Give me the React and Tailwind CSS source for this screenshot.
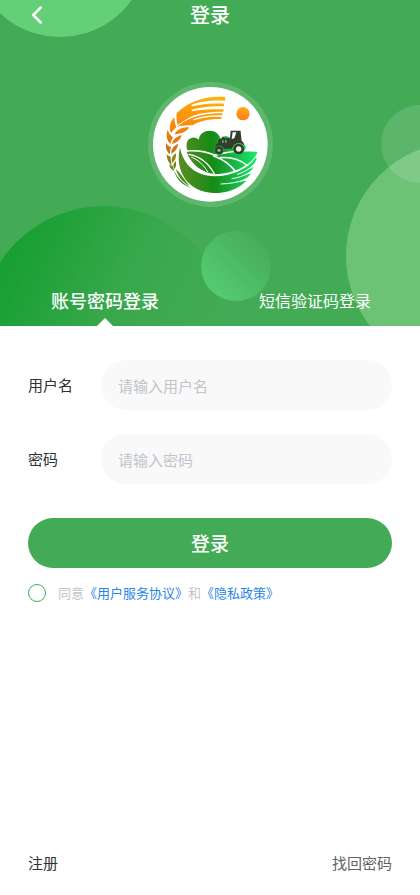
import { useState } from 'react'
import { ChevronLeft } from 'lucide-react'

export default function App() {
  const [tab, setTab] = useState('password')

  return (
    <div className="flex min-h-screen flex-col bg-white font-['Noto_Sans_CJK_SC','Noto_Sans',sans-serif]">
      <Header tab={tab} onTab={setTab} />

      <main className="flex flex-1 flex-col px-7 pt-[34px] pb-5">
        <LoginForm />
        <Footer />
      </main>
    </div>
  )
}

function Header({ tab, onTab }) {
  return (
    <header className="relative isolate overflow-hidden bg-[#43ab55] text-white">
      <HeaderBackground />

      <div className="grid h-[30px] grid-cols-3 items-center px-[22px]">
        <button type="button" aria-label="返回" className="justify-self-start">
          <ChevronLeft size={30} strokeWidth={2} />
        </button>
        <h1 className="text-center text-[20px] leading-7 font-medium">登录</h1>
      </div>

      <div className="mx-auto mt-[52px] size-[125px] rounded-full bg-white/15 p-[5px]">
        <Logo />
      </div>

      <nav className="mt-[78px] grid grid-cols-2">
        <TabButton active={tab === 'password'} onClick={() => onTab('password')}>账号密码登录</TabButton>
        <TabButton active={tab === 'sms'} onClick={() => onTab('sms')}>短信验证码登录</TabButton>
      </nav>
    </header>
  )
}

function TabButton({ active, onClick, children }) {
  return (
    <button type="button" onClick={onClick} className="flex h-[41px] flex-col items-center justify-between">
      <span className={active ? 'text-[18px] leading-[30px] font-medium' : 'text-[16px] leading-[30px]'}>{children}</span>
      {active && (
        <svg width="16" height="8" viewBox="0 0 16 8" fill="#fff">
          <path d="M0 8 8 0l8 8z" />
        </svg>
      )}
    </button>
  )
}

function HeaderBackground() {
  return (
    <svg
      className="absolute inset-0 -z-10 size-full"
      viewBox="0 0 420 326"
      preserveAspectRatio="xMidYMid slice"
      aria-hidden="true"
    >
      <defs>
        <linearGradient id="hill" x1="0.12" y1="0.2" x2="0.95" y2="0.6">
          <stop offset="0" stopColor="#179f31" />
          <stop offset="0.5" stopColor="#38a84c" />
          <stop offset="1" stopColor="#43ab55" />
        </linearGradient>
        <linearGradient id="bubble" x1="0.2" y1="0.8" x2="0.85" y2="0.15">
          <stop offset="0" stopColor="#54c970" />
          <stop offset="1" stopColor="#46ae58" />
        </linearGradient>
      </defs>
      <circle cx="60" cy="-51" r="88" fill="#63d077" />
      <circle cx="104" cy="330" r="124" fill="url(#hill)" />
      <circle cx="236" cy="266" r="35" fill="url(#bubble)" />
      <circle cx="460" cy="256" r="114" fill="#6cc375" />
      <circle cx="420" cy="144" r="39" fill="#fff" fillOpacity="0.13" />
    </svg>
  )
}

// Wheat ear, fields and tractor inside a white disc
function Logo() {
  return (
    <svg className="size-full" viewBox="38 36 345 345" role="img" aria-label="logo">
      <defs>
        <linearGradient id="wheat" gradientUnits="userSpaceOnUse" x1="180" y1="60" x2="120" y2="330">
          <stop offset="0" stopColor="#ffb00c" />
          <stop offset="0.4" stopColor="#f5870c" />
          <stop offset="0.6" stopColor="#dd7412" />
          <stop offset="0.78" stopColor="#7d861c" />
          <stop offset="1" stopColor="#2f8f1c" />
        </linearGradient>
        <linearGradient id="field" gradientUnits="userSpaceOnUse" x1="115" y1="260" x2="340" y2="250">
          <stop offset="0" stopColor="#5c8c20" />
          <stop offset="0.45" stopColor="#168a17" />
          <stop offset="0.75" stopColor="#16b845" />
          <stop offset="1" stopColor="#18e468" />
        </linearGradient>
        <linearGradient id="sun" x1="0" y1="0" x2="0" y2="1">
          <stop offset="0" stopColor="#ffac18" />
          <stop offset="1" stopColor="#ff7a1c" />
        </linearGradient>
      </defs>

      <circle cx="210" cy="208" r="172" fill="#fff" />
      <circle cx="308" cy="116" r="20" fill="url(#sun)" />

      {/* wheat ear */}
      <g fill="url(#wheat)">
        <path d="M255 66C202 61 149 75 109 114C108 128 109 138 112 150C127 139 143 129 158 122C184 113 212 110 249 110L250 103C216 102 185 103 156 109L153 105C181 96 211 93 251 94L252 86C216 84 183 87 155 94L153 90C181 78 215 76 254 77Z" />
        <path d="M247 115C207 114 169 121 142 134C128 141 119 148 111 155C129 151 144 151 157 151C180 137 210 131 243 132L244 126C211 123 184 128 160 136L158 133C184 123 211 120 246 121Z" />
        <path d="M102 126C89 141 85 158 92 174C97 167 103 162 108 156C104 147 102 137 102 126Z" />
        <path d="M82 164C76 181 79 195 90 207C92 199 95 193 98 187C91 182 85 174 82 164Z" />
        <path d="M77 203C75 219 79 229 89 238C89 230 90 222 92 216C86 214 80 210 77 203Z" />
        <path d="M79 237C79 252 84 263 94 272C92 262 91 252 91 245C87 244 82 241 79 237Z" />
        <path d="M86 267C88 278 94 284 102 289C99 281 98 277 97 273C94 272 89 270 86 267Z" />
        <path d="M103 178C108 165 121 157 147 157C139 171 124 176 103 178Z" />
        <path d="M95 207C97 194 107 185 124 180C120 194 112 202 95 207Z" />
        <path d="M93 236C92 222 100 212 114 206C112 219 106 229 93 236Z" />
        <path d="M95 264C92 251 97 241 107 235C108 247 105 257 95 264Z" />
        <path d="M101 283C97 272 99 264 106 258C109 268 108 276 101 283Z" />
        <path d="M101 287C107 310 125 330 151 338C128 325 112 308 101 287Z" />
        <path d="M107 282C112 304 128 323 147 332C133 316 122 296 107 282Z" />
      </g>

      {/* bushes */}
      <path
        d="M141 226C136 209 138 190 157 188C164 187 170 190 175 194C178 175 192 167 208 167C225 167 237 177 240 191C247 181 265 181 271 191L310 208C317 213 318 220 314 224C281 226 248 231 224 238C196 226 168 223 141 226Z"
        fill="url(#field)"
      />

      {/* fields */}
      <g fill="url(#field)">
        <path d="M139 231C169 227 199 234 224 244C263 230 306 227 351 231C344 260 294 296 225 298C183 292 153 269 139 231Z" />
        <path d="M119 217C128 269 165 303 222 304C275 303 323 282 345 248L349 249C346 263 338 273 325 283L340 276C334 288 322 297 307 303L332 295C324 308 311 316 291 321L318 317C294 342 261 354 222 354C155 354 100 300 119 217Z" />
      </g>
      <g fill="none" stroke="#fff" strokeLinecap="round">
        <path d="M220 243C248 253 270 269 285 289" strokeWidth="5" />
        <path d="M146 238C184 245 206 266 223 298" strokeWidth="4" />
        <path d="M154 247C172 253 190 270 202 290" strokeWidth="3" />
        <path d="M240 248C272 245 301 255 320 271" strokeWidth="5" />
        <path d="M338 270C327 283 311 292 291 298" strokeWidth="3" />
        <path d="M328 292C313 302 295 308 275 311" strokeWidth="3" />
        <path d="M316 313C291 323 268 326 242 327" strokeWidth="3" />
      </g>

      {/* tractor */}
      <g fill="#343d2c">
        <path
          fillRule="evenodd"
          d="M271 167H301V172L304 198C310 202 312 207 312 212C304 203 288 202 279 213L274 221H250C248 211 235 209 226 216C224 211 229 207 233 205L235 193L246 191V185H250V190H269ZM277 172L274 192L282 190L288 172Z"
        />
        <path fill="#6da65c" d="M245 196h5v8h-5zM254 195h5v8h-5z" />
        <circle cx="295" cy="222" r="18" fill="#35c957" />
        <circle cx="295" cy="222" r="16" />
        <circle cx="295" cy="222" r="8" fill="#e8f6e9" />
        <circle cx="236" cy="226" r="14" fill="#23a837" />
        <circle cx="236" cy="226" r="12" />
        <circle cx="236" cy="226" r="5" fill="#7fc088" />
      </g>
    </svg>
  )
}

function LoginForm() {
  return (
    <form onSubmit={(e) => e.preventDefault()}>
      <div className="flex flex-col gap-6">
        <Field id="username" label="用户名" type="text" placeholder="请输入用户名" />
        <Field id="password" label="密码" type="password" placeholder="请输入密码" />
      </div>

      <button type="submit" className="mt-[34px] h-[50px] w-full rounded-full bg-[#43ab55] text-[19px] font-medium text-white">
        登录
      </button>

      <div className="mt-4 flex items-center text-[13px] leading-[18px] text-[#c0c4cc]">
        <input
          id="agree"
          type="checkbox"
          className="mr-3 size-[18px] appearance-none rounded-full border border-[#43ab55] checked:bg-[#43ab55]"
        />
        <label htmlFor="agree">同意</label>
        <a href="#terms" className="text-[#2b85e4]">《用户服务协议》</a>
        <span>和</span>
        <a href="#privacy" className="text-[#2b85e4]">《隐私政策》</a>
      </div>
    </form>
  )
}

function Field({ id, label, type, placeholder }) {
  return (
    <div className="flex items-center">
      <label htmlFor={id} className="w-[73px] shrink-0 text-[15px] text-[#303133]">{label}</label>
      <input
        id={id}
        type={type}
        placeholder={placeholder}
        className="h-[50px] min-w-0 flex-1 rounded-full bg-[#f9f9f9] px-[17px] text-[15px] text-[#303133] outline-none placeholder:text-[#c0c4cc]"
      />
    </div>
  )
}

function Footer() {
  return (
    <footer className="mt-auto flex items-center justify-between text-[15px] leading-6">
      <a href="#register" className="text-[#303133]">注册</a>
      <a href="#reset" className="text-[#606266]">找回密码</a>
    </footer>
  )
}
